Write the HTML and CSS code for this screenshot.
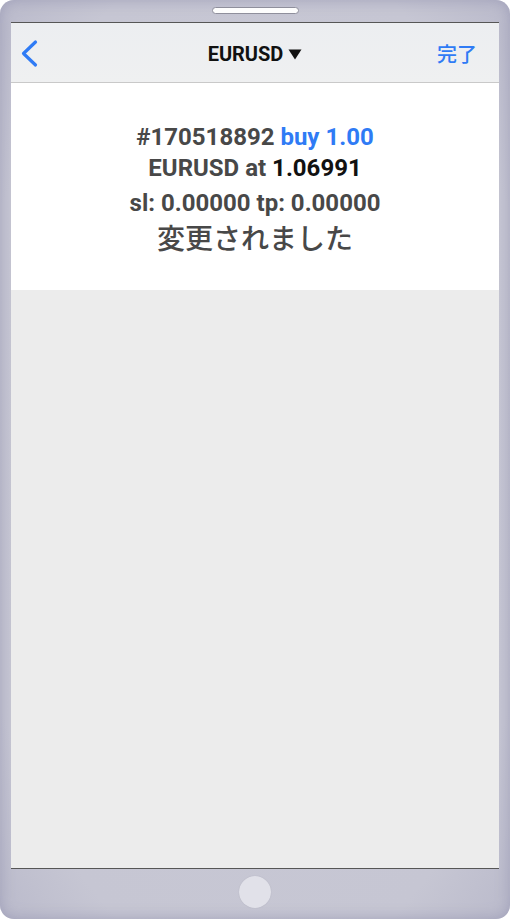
FILE: index.html
```html
<!DOCTYPE html>
<html lang="ja">
<head>
<meta charset="utf-8">
<link rel="stylesheet" href="styles.css">
</head>
<body>
<div class="phone">
  <div class="bezel-top"><div class="speaker"></div></div>
  <div class="screen">
    <div class="navbar">
      <div class="nav-left">
        <svg class="back" width="20" height="30" viewBox="0 0 20 30"><path d="M15.5 4 L3.5 15.5 L15.5 27" fill="none" stroke="#2f7bf5" stroke-width="3.2" stroke-linecap="round" stroke-linejoin="round"/></svg>
      </div>
      <div class="nav-title">EURUSD <svg class="tri" width="14" height="11" viewBox="0 0 14 11"><path d="M0.5 0.5 H13.5 L7 10.5 Z" fill="#111"/></svg></div>
      <div class="nav-right">完了</div>
    </div>
    <div class="message">
      <div class="line">#170518892 <span class="blue">buy 1.00</span></div>
      <div class="line">EURUSD at <span class="black">1.06991</span></div>
      <div class="line sltp">sl: 0.00000 tp: 0.00000</div>
      <div class="line jp">変更されました</div>
    </div>
    <div class="rest"></div>
  </div>
  <div class="bezel-bottom"><div class="home"></div></div>
</div>
</body>
</html>
```
FILE: styles.css
```css
html, body {
  margin: 0;
  padding: 0;
  background: #ffffff;
}
body {
  width: 510px;
  height: 919px;
  overflow: hidden;
}
.phone {
  width: 510px;
  height: 919px;
  border-radius: 14px;
  background: radial-gradient(ellipse at center, #c9c9d5 0%, #c6c6d3 80%, #babacb 100%);
  box-shadow: inset 0 0 14px rgba(150, 150, 178, 0.75);
  display: flex;
  flex-direction: column;
  box-sizing: border-box;
  overflow: hidden;
}
.bezel-top {
  height: 22px;
  flex: none;
  display: flex;
  justify-content: center;
  align-items: flex-start;
}
.speaker {
  margin-top: 7px;
  width: 85px;
  height: 5px;
  background: #fdfdfd;
  border: 1px solid #8f8f9c;
  border-radius: 4px;
}
.screen {
  flex: 1;
  margin: 0 11px;
  border-top: 1px solid #565656;
  border-bottom: 1px solid #565656;
  background: #ececec;
  display: flex;
  flex-direction: column;
}
.navbar {
  height: 60px;
  flex: none;
  box-sizing: border-box;
  background: linear-gradient(to bottom, #eceef1, #eff0f1);
  border-bottom: 1px solid #c9c9c9;
  display: grid;
  grid-template-columns: 1fr auto 1fr;
  align-items: center;
}
.nav-left {
  padding-left: 9px;
  display: flex;
  align-items: center;
}
.back {
  display: block;
  margin-top: 1px;
}
.nav-title {
  font-family: Roboto, "Liberation Sans", sans-serif;
  font-weight: 700;
  font-size: 20px;
  color: #111;
  display: flex;
  align-items: center;
  gap: 5px;
  padding-top: 3px;
}
.tri {
  display: block;
  margin-top: 1px;
}
.nav-right {
  text-align: right;
  padding-right: 22px;
  padding-top: 2px;
  font-family: "Noto Sans CJK JP", sans-serif;
  font-weight: 500;
  font-size: 20px;
  color: #2f7bf5;
}
.message {
  flex: none;
  height: 207px;
  background: #ffffff;
  box-sizing: border-box;
  padding-top: 39px;
  text-align: center;
  font-family: Roboto, "Liberation Sans", sans-serif;
  font-weight: 700;
  font-size: 24px;
  line-height: 31px;
  color: #484848;
}
.line {
  white-space: nowrap;
}
.sltp {
  margin-top: 4px;
}
.blue {
  color: #2f7bf5;
}
.black {
  color: #111111;
}
.jp {
  font-family: "Noto Sans CJK JP", sans-serif;
  font-weight: 500;
  font-size: 28px;
  line-height: 38px;
  margin-top: -1px;
}
.rest {
  flex: 1;
  background: #ececec;
}
.bezel-bottom {
  height: 50px;
  flex: none;
  display: flex;
  justify-content: center;
  align-items: flex-start;
}
.home {
  margin-top: 7px;
  width: 32px;
  height: 32px;
  border-radius: 50%;
  background: #e1e1e9;
  box-shadow: 0 0 1px rgba(120, 120, 140, 0.4);
}
```
